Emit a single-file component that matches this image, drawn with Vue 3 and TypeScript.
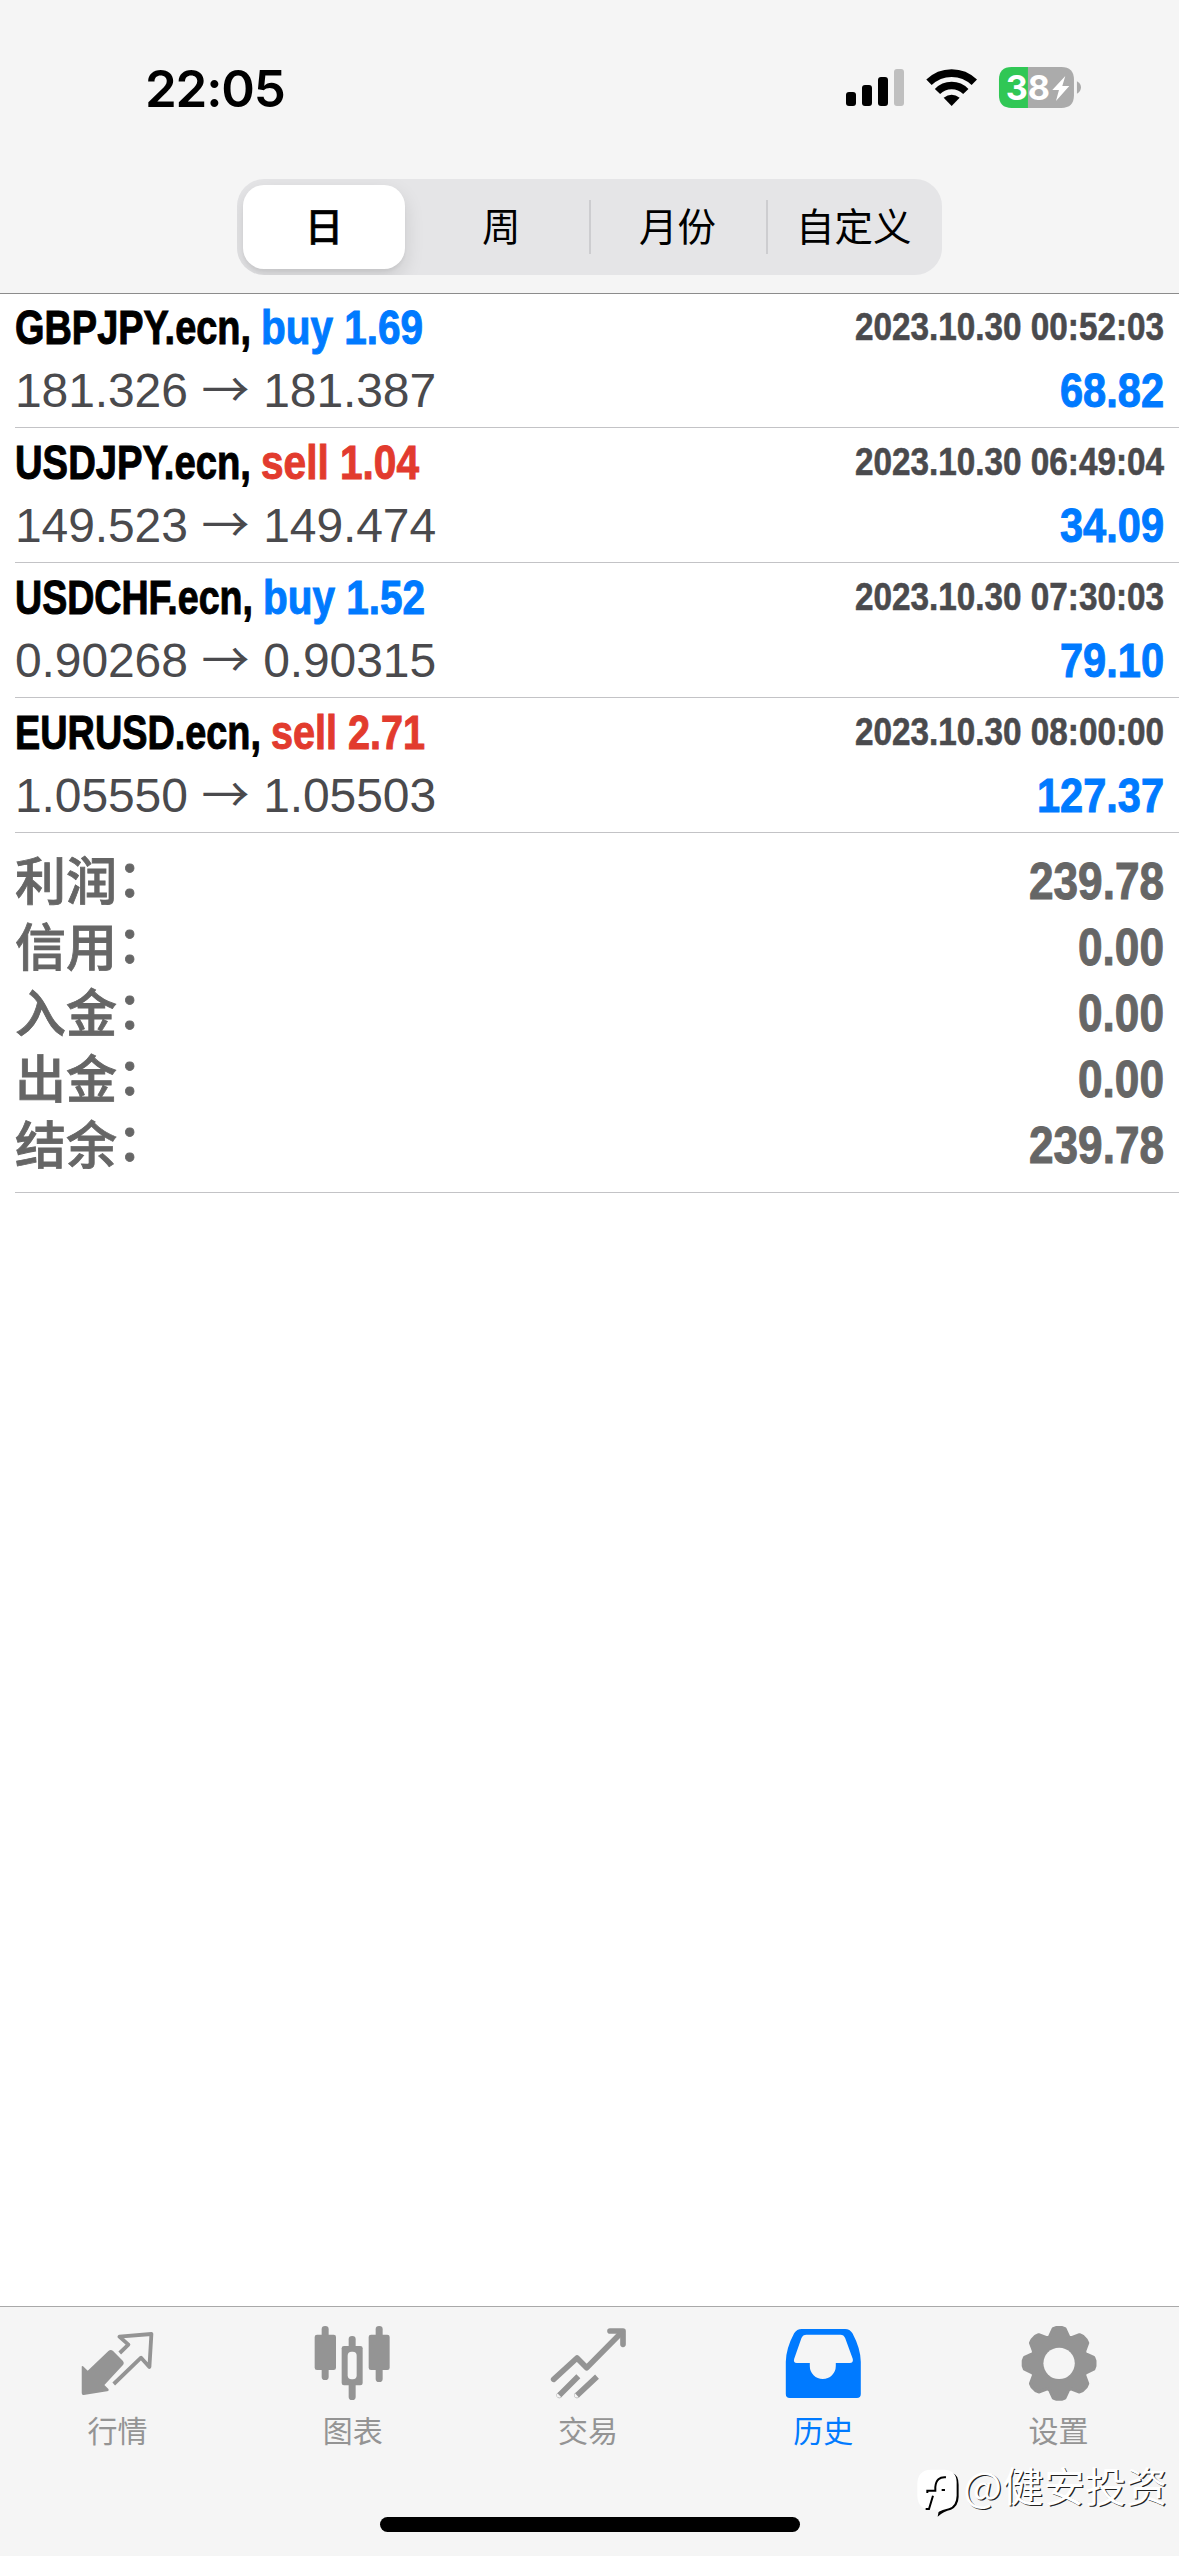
<script setup lang="ts">
interface Deal {
  symbol: string
  symbolWidth: number
  side: 'buy' | 'sell'
  volume: string
  sideWidth: number
  open: string
  close: string
  time: string
  profit: string
  profitWidth: number
}

const periods: string[] = ['日', '周', '月份', '自定义']

const deals: Deal[] = [
  { symbol: 'GBPJPY.ecn,', symbolWidth: 236, side: 'buy', volume: '1.69', sideWidth: 162, open: '181.326', close: '181.387', time: '2023.10.30 00:52:03', profit: '68.82', profitWidth: 104 },
  { symbol: 'USDJPY.ecn,', symbolWidth: 236, side: 'sell', volume: '1.04', sideWidth: 158, open: '149.523', close: '149.474', time: '2023.10.30 06:49:04', profit: '34.09', profitWidth: 104 },
  { symbol: 'USDCHF.ecn,', symbolWidth: 238, side: 'buy', volume: '1.52', sideWidth: 162, open: '0.90268', close: '0.90315', time: '2023.10.30 07:30:03', profit: '79.10', profitWidth: 104 },
  { symbol: 'EURUSD.ecn,', symbolWidth: 246, side: 'sell', volume: '2.71', sideWidth: 154, open: '1.05550', close: '1.05503', time: '2023.10.30 08:00:00', profit: '127.37', profitWidth: 127 },
]

const totals = [
  { label: '利润', value: '239.78', width: 135 },
  { label: '信用', value: '0.00', width: 86 },
  { label: '入金', value: '0.00', width: 86 },
  { label: '出金', value: '0.00', width: 86 },
  { label: '结余', value: '239.78', width: 135 },
]

const tabs = [
  { id: 'quotes', label: '行情', box: '88.8 105 228 228' },
  { id: 'charts', label: '图表', box: '796 105 228 228' },
  { id: 'trade', label: '交易', box: '90 105 228 228' },
  { id: 'history', label: '历史', box: '795.6 105 228 228' },
  { id: 'settings', label: '设置', box: '421.2 105 228 228' },
]

// Horizontal condensing of the bold face: symbols are set tighter than figures
const TIGHT = 0.785
const COND = 0.855

// Eight-toothed gear outline around (538.5, 220)
const gear: string = (() => {
  const pts: string[] = []
  const profile: [number, number][] = [[-20, 84], [-9.5, 105], [-4, 107.5], [4, 107.5], [9.5, 105], [20, 84]]
  for (let i = 0; i < 8; i++) {
    for (const [a, r] of profile) {
      const t = ((i * 45 + a) * Math.PI) / 180
      pts.push(`${(538.5 + r * Math.sin(t)).toFixed(1)} ${(220 - r * Math.cos(t)).toFixed(1)}`)
    }
  }
  return 'M' + pts.join('L') + 'Z'
})()
</script>

<template>
  <div class="screen">
    <header class="top">
      <div class="status">
        <span class="clock">22:05</span>
        <svg class="status-icons" viewBox="78 51 706 123" width="235.3" height="41">
          <rect x="78" y="126" width="30" height="42" rx="9" />
          <rect x="126" y="105" width="30" height="63" rx="9" />
          <rect x="174" y="81" width="30" height="87" rx="9" />
          <rect x="222" y="57" width="30" height="111" rx="9" fill="#bfbfbf" />
          <path d="M327 97A97 97 0 0 1 463 97" fill="none" stroke="#000" stroke-width="23" />
          <path d="M352.500 124.500A59 59 0 0 1 437.500 124.500" fill="none" stroke="#000" stroke-width="22" />
          <path d="M371 143.500Q395 125 419 143.500L395 168Z" />
          <path d="M575 51H624V174H575Q537 174 537 136V89Q537 51 575 51Z" fill="#30c755" />
          <path d="M624 51H724Q762 51 762 89V136Q762 174 724 174H624Z" fill="#ababab" />
          <path d="M771 94Q783 100 783 112Q783 125 771 131Z" fill="#ababab" />
          <text class="level" x="557" y="151" textLength="133" lengthAdjust="spacingAndGlyphs">38</text>
          <path d="M736 78L697 120H717L708 153L748 108H727Z" fill="#fff" />
        </svg>
      </div>
      <div class="segmented">
        <div v-for="(p, i) in periods" :key="p" class="segment" :class="{ active: i === 0, divided: i > 1 }">
          <span>{{ p }}</span>
        </div>
      </div>
    </header>

    <main class="content">
      <section v-for="d in deals" :key="d.symbol" class="deal">
        <div class="line">
          <div class="title">
            <svg class="fit" :width="d.symbolWidth" height="50">
              <text y="40" :transform="`scale(${TIGHT} 1)`" :textLength="d.symbolWidth / TIGHT" lengthAdjust="spacingAndGlyphs">{{ d.symbol }}</text>
            </svg>
            <svg class="fit" :class="d.side" :width="d.sideWidth" height="50">
              <text y="40" :transform="`scale(${COND} 1)`" :textLength="d.sideWidth / COND" lengthAdjust="spacingAndGlyphs">{{ d.side }} {{ d.volume }}</text>
            </svg>
          </div>
          <svg class="fit time" width="309" height="50">
            <text y="36" :transform="`scale(${COND} 1)`" :textLength="309 / COND" lengthAdjust="spacingAndGlyphs">{{ d.time }}</text>
          </svg>
        </div>
        <div class="line second">
          <div class="prices">{{ d.open }} <span class="arrow">→</span> {{ d.close }}</div>
          <svg class="fit buy" :width="d.profitWidth" height="50">
            <text y="40" :transform="`scale(${COND} 1)`" :textLength="d.profitWidth / COND" lengthAdjust="spacingAndGlyphs">{{ d.profit }}</text>
          </svg>
        </div>
      </section>

      <section class="totals">
        <div v-for="t in totals" :key="t.label" class="total">
          <span class="label">{{ t.label }}<span class="colon">：</span></span>
          <svg class="fit sum" :width="t.width" height="50">
            <text y="42" :transform="`scale(${COND} 1)`" :textLength="t.width / COND" lengthAdjust="spacingAndGlyphs">{{ t.value }}</text>
          </svg>
        </div>
      </section>
    </main>

    <footer class="bottom">
      <nav class="tabs">
        <div v-for="t in tabs" :key="t.id" class="tab" :class="{ current: t.id === 'history' }">
          <svg class="tab-icon" :viewBox="t.box" width="76" height="76">
            <g v-if="t.id === 'quotes'">
              <path d="M94 230Q94 226 98 229L112 242L174 183Q181 177 188 183L217 212Q223 219 217 226L162 285L174 297Q177 302 170 304L100 315Q94 316 94 309Z" fill="currentColor" />
              <path d="M208 189L234 164L207 140L303 132L297 231L272 203L190 282" fill="none" stroke="currentColor" stroke-width="11.500" stroke-linejoin="round" />
            </g>
            <g v-else-if="t.id === 'charts'" fill="currentColor">
              <rect x="816" y="108" width="21" height="162" rx="10" />
              <rect x="795" y="134" width="64" height="106" rx="7" />
              <rect x="897" y="138" width="21" height="192" rx="10" />
              <rect x="876" y="168" width="63" height="118" rx="7" />
              <rect x="894" y="185" width="27" height="83" rx="12" fill="#f5f5f5" />
              <rect x="978" y="108" width="21" height="168" rx="10" />
              <rect x="957" y="134" width="63" height="106" rx="7" />
            </g>
            <g v-else-if="t.id === 'trade'" fill="none" stroke="currentColor" stroke-width="17" stroke-linejoin="round">
              <path d="M101 268L171 204L200 233L306 126" stroke-linecap="round" />
              <path d="M270 123H309V163" stroke-linecap="round" />
              <path d="M118 316L175 259M171 316L231 260" />
              <circle cx="118" cy="316" r="0.5" stroke-width="16" />
              <circle cx="171" cy="316" r="0.5" stroke-width="16" />
            </g>
            <path v-else-if="t.id === 'history'" fill="currentColor" fill-rule="evenodd" d="M846 117H976Q990 117 998 130Q1022 175 1023 215V312Q1023 324 1011 324H810Q798 324 798 312V215Q799 175 823 130Q831 117 846 117ZM860 134H962Q972 134 976 144L999 207Q1001 219 990 219H948V228A39 39 0 0 1 870 228V219H831Q820 219 823 207L845 144Q849 134 860 134Z" />
            <g v-else>
              <path :d="gear" fill="currentColor" stroke="currentColor" stroke-width="10" stroke-linejoin="round" />
              <circle cx="538.5" cy="220" r="47" fill="#f5f5f5" />
            </g>
          </svg>
          <span class="tab-label">{{ t.label }}</span>
        </div>
      </nav>
      <div class="home-bar"></div>
      <div class="watermark">
        <svg class="mark" viewBox="110 538 130 146" width="43.300" height="48.700">
          <path d="M215 550Q235 555 235 585V622Q234 650 212 660Q190 664 172 681L176 660L190 640Z" fill="#000" />
          <path d="M150 540H192Q228 542 229 576V618Q228 648 206 656Q186 660 172 668L174 660H150Q113 658 111 620V580Q113 542 150 540Z" fill="#fff" />
          <path d="M197 563Q168 560 165 592V603H141V610M158 618L146 658H136M184 601H194" fill="none" stroke="#000" stroke-width="6" />
        </svg>
        <span class="author">@健安投资</span>
      </div>
    </footer>
  </div>
</template>

<style>
html,
body {
  margin: 0;
  background: #fff;
}
</style>

<style scoped>
.screen {
  width: 1179px;
  height: 2556px;
  display: flex;
  flex-direction: column;
  overflow: hidden;
  background: #fff;
  font-family: "Liberation Sans", "Noto Sans CJK SC", sans-serif;
}
.top {
  box-sizing: border-box;
  height: 294px;
  background: #f5f5f5;
  border-bottom: 1px solid #8c8c8c;
}
.status {
  box-sizing: border-box;
  height: 179px;
  padding: 58px 98px 0 145px;
  display: flex;
  justify-content: space-between;
}
.clock {
  font: 600 51px/62px Inter, sans-serif;
  letter-spacing: -1.2px;
}
.status-icons {
  margin-top: 9px;
}
.level {
  font: 700 103px Inter, sans-serif;
  fill: #fff;
}
.segmented {
  width: 705px;
  height: 96px;
  margin: 0 auto;
  border-radius: 27px;
  background: #e5e5e7;
  display: flex;
  overflow: hidden;
}
.segment {
  flex: 1;
  display: flex;
  align-items: center;
  justify-content: center;
  font: 400 38.5px/56px "Noto Sans CJK SC", sans-serif;
  color: #000;
}
.segment span {
  margin-bottom: 6px;
}
.segment.divided {
  background: linear-gradient(#cdcdd0, #cdcdd0) no-repeat left center / 2px 54px;
}
.segment.active {
  flex: none;
  width: 162px;
  height: 84px;
  margin: 6px 8px 0 6px;
  border-radius: 21px;
  background: #fff;
  font-weight: 500;
  -webkit-text-stroke: 0.5px #000;
  box-shadow: 0 8px 20px rgba(0, 0, 0, 0.12), 0 3px 3px rgba(0, 0, 0, 0.04);
}
.content {
  flex: 1;
  padding-left: 15px;
}
.deal {
  box-sizing: border-box;
  height: 135px;
  padding: 11px 15px 0 0;
  border-bottom: 1px solid #c3c3c6;
}
.deal:first-child {
  height: 134px;
  padding-top: 10px;
}
.line {
  display: flex;
  justify-content: space-between;
  height: 50px;
}
.second {
  margin-top: 13px;
}
.title {
  display: flex;
  gap: 10px;
}
.fit {
  display: block;
  overflow: visible;
  font: 700 48px "Liberation Sans", sans-serif;
  fill: #000;
  stroke: #000;
  stroke-width: 1px;
}
.fit.buy {
  fill: #007aff;
  stroke: #007aff;
}
.fit.sell {
  fill: #e23b2e;
  stroke: #e23b2e;
}
.fit.time {
  font-size: 39px;
  stroke-width: 0.6px;
  fill: #4a4a4d;
  stroke: #4a4a4d;
}
.fit.sum {
  font-size: 51px;
  fill: #666;
  stroke: #666;
}
.prices {
  height: 50px;
  margin-top: -5px;
  font-size: 48px;
  line-height: 50px;
  letter-spacing: -0.1px;
  word-spacing: 0.5px;
  color: #4a4a4d;
  white-space: pre;
}
.arrow {
  font-family: "Noto Sans CJK SC", sans-serif;
  font-weight: 400;
  line-height: 1;
}
.totals {
  box-sizing: border-box;
  height: 360px;
  padding: 16px 15px 0 0;
  border-bottom: 1px solid #c3c3c6;
}
.total {
  display: flex;
  justify-content: space-between;
  align-items: center;
  height: 66px;
}
.label {
  margin-bottom: 9px;
  font: 500 51px/66px "Noto Sans CJK SC", sans-serif;
  color: #666;
  -webkit-text-stroke: 0.8px #666;
}
.colon {
  position: relative;
  top: -3px;
}
.bottom {
  position: relative;
  box-sizing: border-box;
  height: 250px;
  background: #f5f5f5;
  border-top: 1px solid #a9a9a9;
}
.tabs {
  display: flex;
  padding: 18px 3px 0 0;
}
.tab {
  flex: 1;
  display: flex;
  flex-direction: column;
  align-items: center;
  color: #949494;
}
.tab.current {
  color: #007aff;
}
.tab-icon {
  overflow: visible;
}
.tab-label {
  margin-top: 6px;
  font: 400 30px/44px "Noto Sans CJK SC", sans-serif;
}
.home-bar {
  width: 420px;
  height: 15px;
  margin: 66px auto 0;
  border-radius: 8px;
  background: #000;
}
.watermark {
  position: absolute;
  left: 917px;
  top: 148px;
  display: flex;
  gap: 3px;
}
.mark {
  margin-top: 14px;
}
.author {
  font: 400 41px/58px "Noto Sans CJK SC", sans-serif;
  letter-spacing: 0.3px;
  color: #fff;
  text-shadow: 1.300px 1.300px 0.500px #222;
}
</style>
